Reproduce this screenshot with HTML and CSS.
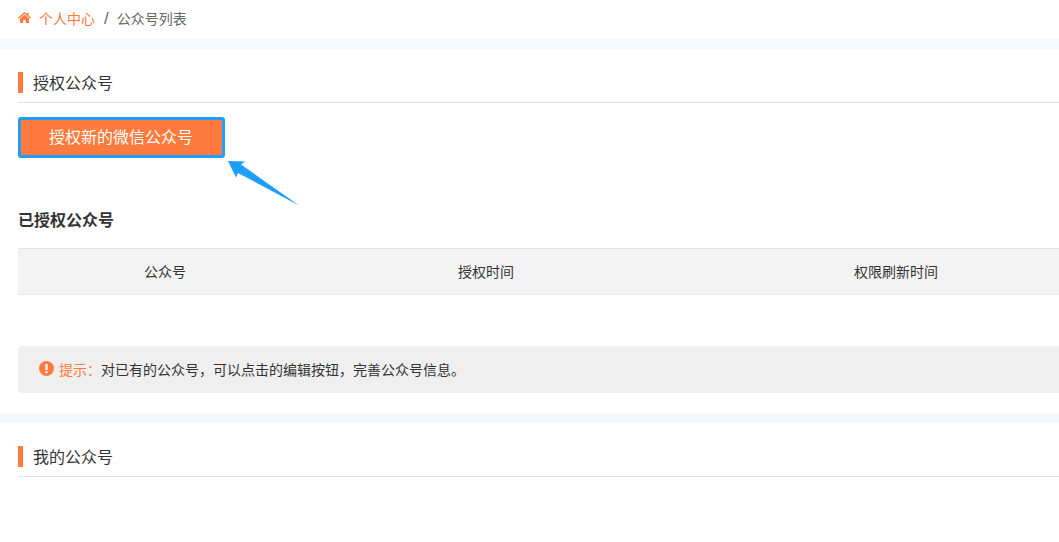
FILE: index.html
```html
<!DOCTYPE html>
<html lang="zh-CN">
<head>
  <meta charset="UTF-8">
  <title>公众号列表</title>
  <link rel="stylesheet" href="styles.css">
</head>
<body>
  <!-- Breadcrumb -->
  <div class="breadcrumb">
    <svg class="home-icon" viewBox="0 0 26 22" width="13" height="11">
      <path d="M13 0 L17.5 4 V1.5 H21 V7.2 L26 11.6 L24.4 13.4 L13 3.6 L1.6 13.4 L0 11.6 Z"/>
      <path d="M13 5.6 L22 13.2 V22 H15.5 V15.5 H10.5 V22 H4 V13.2 Z"/>
    </svg>
    <a class="crumb-link" href="#">个人中心</a>
    <span class="crumb-sep">/</span>
    <span>公众号列表</span>
  </div>

  <div class="panel panel-auth">
    <div class="section-title"><span class="title-text">授权公众号</span></div>
    <button class="auth-btn">授权新的微信公众号</button>

    <!-- Arrow pointing at the button -->
    <svg class="arrow" viewBox="0 0 72 50" width="72" height="50">
      <path d="M0 2 L17 2.5 L13 5.5 L71 46.5 L10 14 L8 18.5 Z"/>
    </svg>

    <h3 class="sub-title">已授权公众号</h3>
    <div class="table-wrap">
      <table class="auth-table">
        <thead>
          <tr>
            <th class="col-name">公众号</th>
            <th class="col-time">授权时间</th>
            <th>权限刷新时间</th>
          </tr>
        </thead>
      </table>
    </div>

    <div class="tip">
      <svg class="tip-icon" viewBox="0 0 16 16" width="15" height="15">
        <circle cx="8" cy="8" r="8"/>
        <rect x="6.7" y="3" width="2.6" height="6.6" rx="0.6" fill="#efefef"/>
        <rect x="6.7" y="10.6" width="2.6" height="2.5" rx="0.6" fill="#efefef"/>
      </svg>
      <span class="tip-label">提示：</span><span>对已有的公众号，可以点击的编辑按钮，完善公众号信息。</span>
    </div>
  </div>

  <div class="panel panel-mine">
    <div class="section-title"><span class="title-text">我的公众号</span></div>
  </div>
</body>
</html>
```

FILE: styles.css
```css
* {
  box-sizing: border-box;
}

html, body {
  height: 100%;
}

body {
  margin: 0;
  overflow: hidden;
  background-color: #fff;
  font-family: "Liberation Sans", "Noto Sans CJK SC", sans-serif;
  font-size: 14px;
  color: #333;
}

/* Breadcrumb */
.breadcrumb {
  display: flex;
  align-items: center;
  height: 39px;
  padding-left: 18px;
  padding-bottom: 4px;
  color: #666;
}

.home-icon {
  fill: #ff7a3d;
  margin-right: 8px;
}

.crumb-link {
  color: #ff7a3d;
  text-decoration: none;
}

.crumb-sep {
  margin: 2px 8px 0 9px;
  font-size: 17px;
}

/* Panels */
.panel {
  position: relative;
  border-top: 10px solid #f7f8fa;
  padding: 23px 0 0 18px;
}

.panel-auth {
  height: 374px;
}

.section-title {
  height: 31px;
  border-bottom: 1px solid #e0e0e5;
}

.title-text {
  display: block;
  height: 21px;
  line-height: 23px;
  padding-left: 10px;
  border-left: 5px solid #ff7a3d;
  font-size: 16px;
  color: #333;
}

.auth-btn {
  display: block;
  width: 207px;
  height: 41px;
  margin-top: 14px;
  padding: 0 1px 3px 0;
  background-color: #ff7a3d;
  border: 3px solid #1e9fff;
  border-radius: 3px;
  color: #fff;
  font-family: inherit;
  font-size: 16px;
}

.arrow {
  position: absolute;
  left: 228px;
  top: 110px;
  fill: #1e9fff;
}

.sub-title {
  margin: 52px 0 0;
  height: 21px;
  line-height: 21px;
  font-size: 16px;
  font-weight: bold;
  color: #333;
}

.table-wrap {
  margin-top: 17px;
  overflow: hidden;
}

.auth-table {
  width: 1114px;
  height: 47px;
  border-collapse: collapse;
  table-layout: fixed;
}

.auth-table th {
  padding: 0 0 2px;
  background-color: #f3f3f3;
  border-top: 1px solid #e2e2e2;
  border-bottom: 1px solid #e8e8e8;
  font-size: 14px;
  font-weight: normal;
  color: #333;
  text-align: center;
}

.col-name {
  width: 294px;
}

.col-time {
  width: 348px;
}

/* Hint box */
.tip {
  display: flex;
  align-items: center;
  height: 47px;
  margin-top: 51px;
  padding: 0 0 2px 21px;
  background-color: #efefef;
  border-radius: 4px 0 0 4px;
}

.tip-icon {
  fill: #ff7a3d;
  margin-right: 5px;
}

.tip-label {
  color: #ff7a3d;
}

.panel-mine {
  padding-top: 23px;
}
```
